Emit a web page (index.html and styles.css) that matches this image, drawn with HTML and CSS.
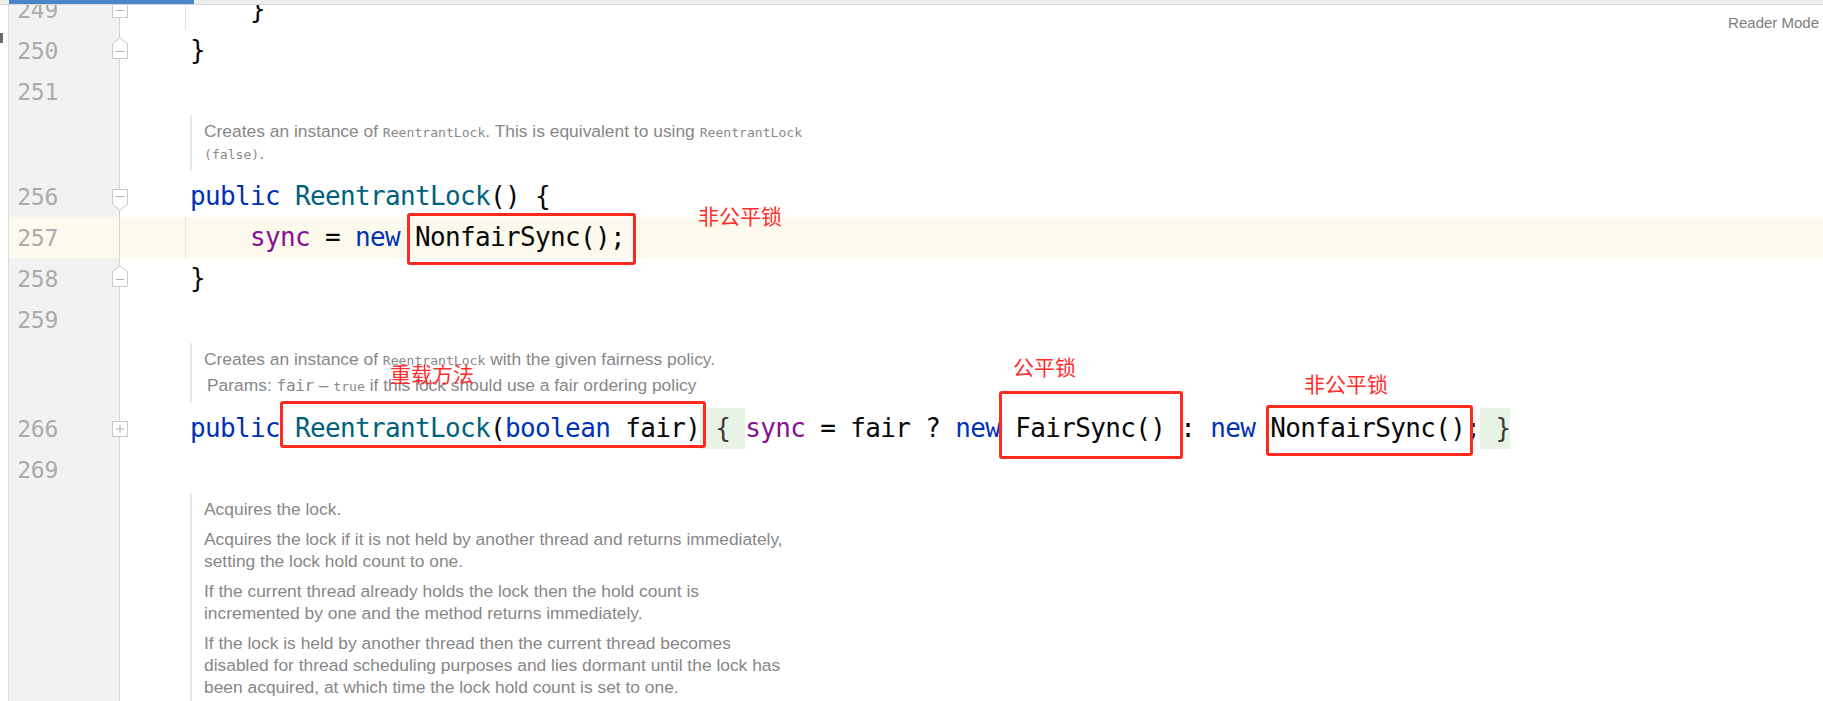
FILE: index.html
```html
<!DOCTYPE html>
<html lang="zh-CN">

<head>
    <meta charset="UTF-8" />
    <meta name="viewport" content="width=device-width, initial-scale=1.0" />
    <title>ReentrantLock.java</title>
    <link rel="stylesheet" href="styles.css">
</head>

<body>
    <div class="topbar">
        <div class="progress"></div>
    </div>

    <div class="viewport">
        <div class="editor">
            <div class="line">
                <div class="gutter">
                    <span class="num">249</span>
                    <svg class="fold fold-up" width="16" height="22" viewBox="0 0 16 22"><path class="fold-shape" d="M0.5 21.5V6.5L8 0.8L15.5 6.5V21.5Z"/><path class="fold-sign" d="M4 14.5H12"/></svg>
                </div>
                <div class="code guide">    }</div>
            </div>
            <div class="line">
                <div class="gutter">
                    <span class="num">250</span>
                    <svg class="fold fold-up" width="16" height="22" viewBox="0 0 16 22"><path class="fold-shape" d="M0.5 21.5V6.5L8 0.8L15.5 6.5V21.5Z"/><path class="fold-sign" d="M4 14.5H12"/></svg>
                </div>
                <div class="code">}</div>
            </div>
            <div class="line">
                <div class="gutter"><span class="num">251</span></div>
                <div class="code"></div>
            </div>

            <!-- javadoc: ReentrantLock() -->
            <div class="line doc-line">
                <div class="gutter"></div>
                <div class="doc-cell">
                    <div class="doc">
                        <p>Creates an instance of <code>ReentrantLock</code>. This is equivalent to using <code>ReentrantLock</code><br><code>(false)</code>.</p>
                    </div>
                </div>
            </div>

            <div class="line">
                <div class="gutter">
                    <span class="num">256</span>
                    <svg class="fold fold-down" width="16" height="22" viewBox="0 0 16 22"><path class="fold-shape" d="M0.5 0.5H15.5V15.5L8 21.2L0.5 15.5Z"/><path class="fold-sign" d="M4 7.5H12"/></svg>
                </div>
                <div class="code"><span class="kw">public</span> <span class="fn">ReentrantLock</span>() {</div>
            </div>
            <div class="line current">
                <div class="gutter"><span class="num">257</span></div>
                <div class="code guide">    <span class="fld">sync</span> = <span class="kw">new</span> NonfairSync();</div>
            </div>
            <div class="line">
                <div class="gutter">
                    <span class="num">258</span>
                    <svg class="fold fold-up" width="16" height="22" viewBox="0 0 16 22"><path class="fold-shape" d="M0.5 21.5V6.5L8 0.8L15.5 6.5V21.5Z"/><path class="fold-sign" d="M4 14.5H12"/></svg>
                </div>
                <div class="code">}</div>
            </div>
            <div class="line">
                <div class="gutter"><span class="num">259</span></div>
                <div class="code"></div>
            </div>

            <!-- javadoc: ReentrantLock(boolean) -->
            <div class="line doc-line">
                <div class="gutter"></div>
                <div class="doc-cell">
                    <div class="doc">
                        <p>Creates an instance of <code>ReentrantLock</code> with the given fairness policy.</p>
                        <p class="params">Params: <code class="big">fair</code> – <code>true</code> if this lock should use a fair ordering policy</p>
                    </div>
                </div>
            </div>

            <div class="line">
                <div class="gutter">
                    <span class="num">266</span>
                    <svg class="fold fold-sq" width="16" height="16" viewBox="0 0 16 16"><rect class="fold-shape" x="0.5" y="0.5" width="15" height="15"/><path class="fold-sign" d="M4 8H12M8 4V12"/></svg>
                </div>
                <div class="code"><span class="kw">public</span> <span class="fn">ReentrantLock</span>(<span class="kw">boolean</span> fair)<span class="folded"> { </span><span class="fld">sync</span> = fair ? <span class="kw">new</span> FairSync() : <span class="kw">new</span> NonfairSync();<span class="folded"> }</span></div>
            </div>
            <div class="line">
                <div class="gutter"><span class="num">269</span></div>
                <div class="code"></div>
            </div>

            <!-- javadoc: lock() -->
            <div class="line doc-line">
                <div class="gutter"></div>
                <div class="doc-cell">
                    <div class="doc">
                        <p>Acquires the lock.</p>
                        <p>Acquires the lock if it is not held by another thread and returns immediately,<br>setting the lock hold count to one.</p>
                        <p>If the current thread already holds the lock then the hold count is<br>incremented by one and the method returns immediately.</p>
                        <p>If the lock is held by another thread then the current thread becomes<br>disabled for thread scheduling purposes and lies dormant until the lock has<br>been acquired, at which time the lock hold count is set to one.</p>
                    </div>
                </div>
            </div>
        </div>
    </div>

    <div class="reader-mode">Reader Mode</div>
    <div class="edge-mark"></div>

    <!-- annotations -->
    <div class="mark mark-nonfair"></div>
    <div class="mark mark-ctor"></div>
    <div class="mark mark-fair"></div>
    <div class="mark mark-nonfair2"></div>

    <span class="note note-nonfair">非公平锁</span>
    <span class="note note-ctor">重载方法</span>
    <span class="note note-fair">公平锁</span>
    <span class="note note-nonfair2">非公平锁</span>
</body>

</html>
```

FILE: styles.css
```css
/* General Reset */
* {
    margin: 0;
    padding: 0;
    box-sizing: border-box;
}

body {
    font-family: "Liberation Sans", Arial, sans-serif;
    background: #fff;
    color: #080808;
    height: 100vh;
    overflow: hidden;
}

/* Top strip */
.topbar {
    height: 5px;
    background: #ededed;
    border-bottom: 1px solid #d6d6d6;
}

.progress {
    margin-left: 9px;
    width: 185px;
    height: 4px;
    background: #4a86c8;
}

.viewport {
    height: calc(100vh - 5px);
    overflow: hidden;
}

.editor {
    margin-top: -16px;
}

/* Editor lines */
.line {
    display: flex;
    height: 41px;
}

.doc-line {
    height: auto;
}

.gutter {
    flex: none;
    margin-left: 8px;
    width: 112px;
    background: #f2f2f2;
    border-left: 1px solid #dcdcdc;
    border-right: 1px solid #d6d6d6;
    display: flex;
    align-items: center;
    position: relative;
}

.num {
    width: 49px;
    text-align: right;
    font-family: "DejaVu Sans Mono", monospace;
    font-size: 23px;
    letter-spacing: -0.25px;
    color: #ababab;
}

.fold {
    position: absolute;
    left: 103px;
    top: 50%;
}

.fold-up {
    margin-top: -14px;
}

.fold-down,
.fold-sq {
    margin-top: -8px;
}

.fold-shape {
    fill: #fff;
    stroke: #c8c8c8;
}

.fold-sign {
    fill: none;
    stroke: #b4b4b4;
}

.code {
    flex: 1;
    padding-left: 70px;
    font-family: "DejaVu Sans Mono", monospace;
    font-size: 26px;
    letter-spacing: -0.65px;
    line-height: 41px;
    white-space: pre;
    position: relative;
}

.guide::before {
    content: "";
    position: absolute;
    left: 65px;
    top: 0;
    bottom: 0;
    border-left: 1px solid #e3e3e3;
}

.current .gutter,
.current .code {
    background: #fcfaed;
}

.kw {
    color: #0033b3;
}

.fn {
    color: #00627a;
}

.fld {
    color: #871094;
}

.folded {
    display: inline-block;
    background: #e8f3e5;
    color: #3d3d3d;
}

/* Rendered javadoc */
.doc-cell {
    flex: 1;
    padding: 3px 0 5px 70px;
}

.doc {
    border-left: 2px solid #e6e6e6;
    padding: 5px 0 7px 12px;
    font-size: 17.4px;
    line-height: 22px;
    color: #878787;
}

.doc p + p {
    margin-top: 8px;
}

.doc .params {
    margin-top: 4px;
    padding-left: 3px;
}

.doc code {
    font-family: "DejaVu Sans Mono", monospace;
    font-size: 13.1px;
    line-height: 1;
    color: #8a8a8a;
}

.doc code.big {
    font-size: 16px;
    letter-spacing: -0.3px;
}

.reader-mode {
    position: absolute;
    top: 15px;
    right: 4px;
    font-size: 15px;
    line-height: 15px;
    color: #7d7d7d;
}

.edge-mark {
    position: absolute;
    left: 0;
    top: 33px;
    width: 3px;
    height: 10px;
    background: #6a6a6a;
}

/* Red annotations */
.mark {
    position: absolute;
    border: 3px solid #ff2a1e;
    border-radius: 3px;
}

.mark-nonfair {
    left: 407px;
    top: 213px;
    width: 229px;
    height: 52px;
}

.mark-ctor {
    left: 280px;
    top: 401px;
    width: 426px;
    height: 47px;
}

.mark-fair {
    left: 999px;
    top: 391px;
    width: 184px;
    height: 68px;
}

.mark-nonfair2 {
    left: 1266px;
    top: 405px;
    width: 207px;
    height: 51px;
}

.note {
    position: absolute;
    font-family: "Noto Sans CJK SC", sans-serif;
    font-size: 21px;
    line-height: 21px;
    color: #ff2d2d;
}

.note-nonfair {
    left: 698px;
    top: 205px;
}

.note-ctor {
    left: 390px;
    top: 363px;
}

.note-fair {
    left: 1013px;
    top: 356px;
}

.note-nonfair2 {
    left: 1304px;
    top: 373px;
}
```
